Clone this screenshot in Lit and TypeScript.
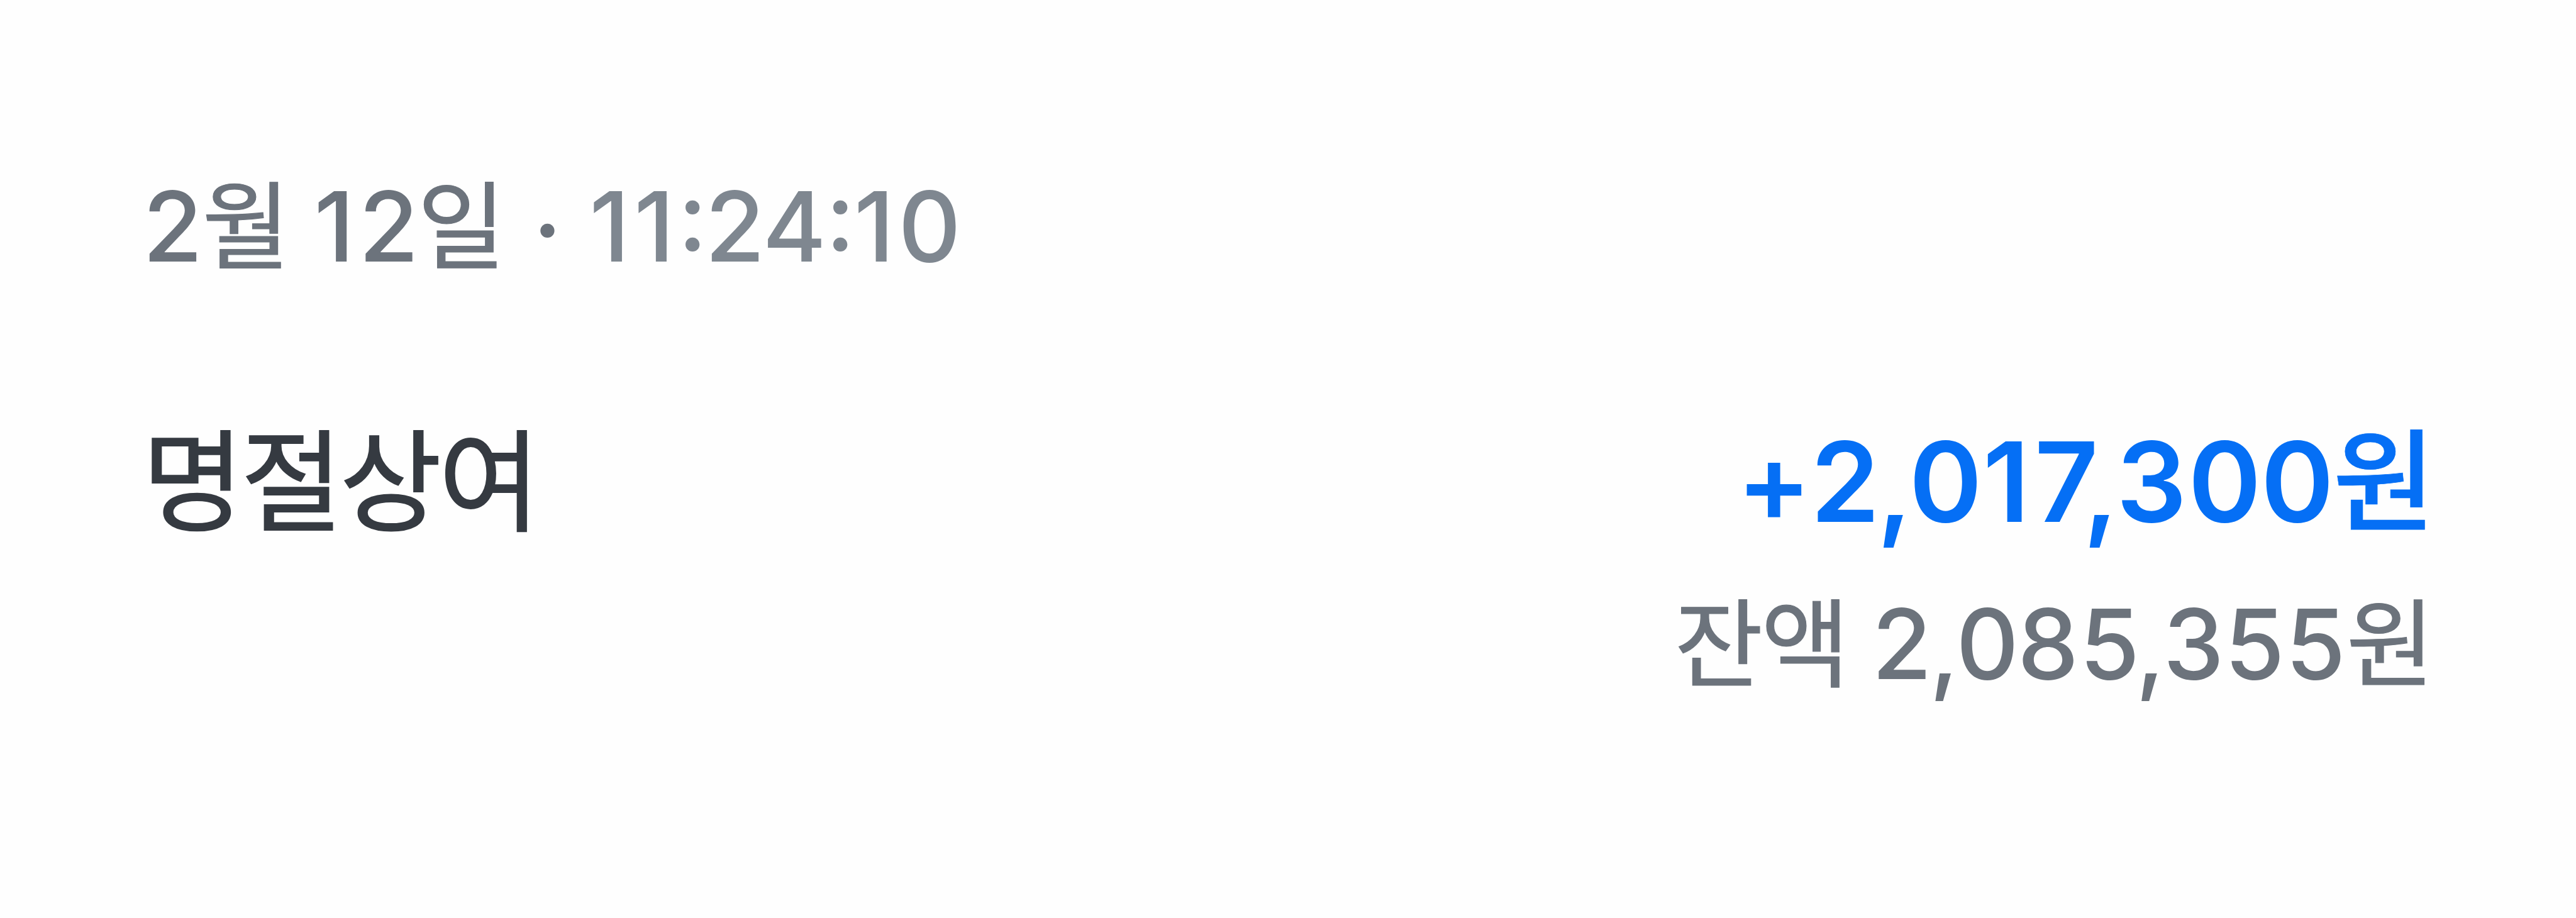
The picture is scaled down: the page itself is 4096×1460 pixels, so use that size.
import { LitElement, html, css } from 'lit';
import { customElement, property } from 'lit/decorators.js';
import { classMap } from 'lit/directives/class-map.js';

// extra space between two neighbouring figures, in em
const KERNING: Record<string, number> = {
  '11': 0.045,
  '12': 0.044,
  '10': 0.04,
  '17': 0.043,
  '1:': 0.035,
  ':2': -0.023,
  ':1': -0.011,
  '24': -0.024,
  '4:': -0.008,
  '+2': -0.008,
  '2,': -0.025,
  '5,': -0.042,
  '7,': -0.138,
  ',0': -0.029,
  ',3': -0.02,
  '01': 0.005,
  '08': -0.014,
  '85': 0.01,
  '35': 0.006,
  '55': 0.01,
  '30': 0.012,
  '00': -0.005,
};

@customElement('figure-text')
export class FigureText extends LitElement {
  static styles = css`
    :host {
      display: inline;
    }

    .run {
      display: inline-block;
      line-height: 0;
    }

    .colon {
      vertical-align: 0.109em;
    }

    .comma {
      vertical-align: -0.046em;
    }
  `;

  @property() value = '';

  private _runs() {
    const runs: { text: string; gap: number }[] = [];
    [...this.value].forEach((char, i) => {
      const gap = KERNING[this.value.slice(i - 1, i + 1)];
      if (i === 0 || gap !== undefined) {
        runs.push({ text: char, gap: gap ?? 0 });
      } else {
        runs[runs.length - 1].text += char;
      }
    });
    return runs;
  }

  render() {
    return this._runs().map(
      (run) => html`<span
        class=${classMap({ run: true, colon: run.text === ':', comma: run.text === ',' })}
        style="margin-left: ${run.gap}em"
      >${run.text}</span>`
    );
  }
}

@customElement('app-root')
export class AppRoot extends LitElement {
  static styles = css`
    :host {
      display: block;
      box-sizing: border-box;
      width: 4096px;
      height: 1460px;
      padding: 260px 224px 0 226px;
      background: #fefefe;
      font-family: Inter, 'Noto Sans CJK KR', sans-serif;
      font-weight: 500;
      white-space: nowrap;
      overflow: hidden;
    }

    .meta,
    .balance {
      font-size: 154.5px;
      line-height: 200px;
      color: #6c737c;
    }

    .meta {
      padding-left: 1px;
    }

    .entry {
      display: flex;
      justify-content: space-between;
      margin-top: 176px;
    }

    .name,
    .amount {
      font-size: 176.4px;
      line-height: 260px;
    }

    .name {
      color: #353a41;
    }

    .amount {
      font-weight: 600;
      color: #056ff5;
    }

    .values {
      text-align: right;
    }

    .balance {
      margin: 28px 1px 0 0;
    }

    .ko {
      font-family: 'Noto Sans CJK KR', sans-serif;
      font-weight: 400;
      font-size: 0.986em;
      line-height: 0;
      -webkit-text-stroke: 0.008em currentColor;
    }

    .month {
      margin: 0 -3px 0 -1px;
    }

    .day {
      margin: 0 2px 0 -2px;
    }

    .dot {
      margin-right: 2px;
      line-height: 0;
      vertical-align: -0.026em;
    }

    .time {
      color: #7f8790;
    }

    .name .ko {
      font-size: 176px;
      letter-spacing: -4.8px;
      vertical-align: -1px;
      -webkit-text-stroke-width: 0.01em;
    }

    .amount .ko {
      font-size: 177px;
      font-weight: 500;
      margin-left: -2px;
      vertical-align: -1px;
      -webkit-text-stroke-width: 0.004em;
    }

    .balance .label {
      font-size: 153px;
      letter-spacing: -3.3px;
      margin-right: -2px;
      vertical-align: -1px;
    }

    .balance .unit {
      margin-left: 1px;
    }
  `;

  render() {
    return html`
      <div class="meta"><figure-text value="2"></figure-text><span class="ko month">월</span> <figure-text value="12"></figure-text><span class="ko day">일</span> <span class="dot">·</span> <figure-text class="time" value="11:24:10"></figure-text></div>
      <div class="entry">
        <div class="name"><span class="ko">명절상여</span></div>
        <div class="values">
          <div class="amount"><figure-text value="+2,017,300"></figure-text><span class="ko">원</span></div>
          <div class="balance"><span class="ko label">잔액</span> <figure-text value="2,085,355"></figure-text><span class="ko unit">원</span></div>
        </div>
      </div>
    `;
  }
}
